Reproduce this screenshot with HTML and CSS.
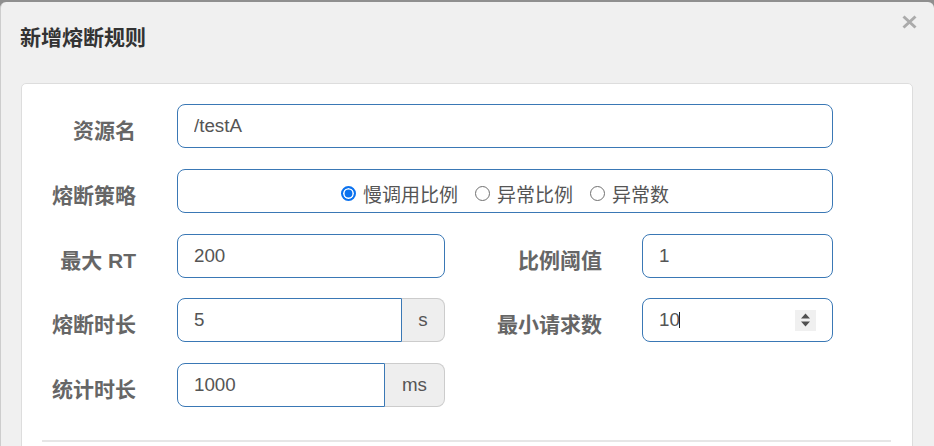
FILE: index.html
```html
<!DOCTYPE html>
<html lang="zh-CN">
<head>
<meta charset="utf-8">
<title>新增熔断规则</title>
<link rel="stylesheet" href="styles.css">
</head>
<body>
<div class="modal">
  <div class="modal-header">
    <h4 class="modal-title">新增熔断规则</h4>
    <button class="close" type="button" aria-label="关闭">
      <svg width="15" height="14" viewBox="0 0 15 14"><path d="M1.5 1.5 L13.5 12.5 M13.5 1.5 L1.5 12.5" stroke="#ababab" stroke-width="3" fill="none"/></svg>
    </button>
  </div>
  <div class="modal-body">
    <div class="panel">
      <form class="form">
        <div class="row">
          <label class="label">资源名</label>
          <div class="field field-wide"><input class="input" type="text" value="/testA"></div>
        </div>
        <div class="row">
          <label class="label">熔断策略</label>
          <div class="field field-wide">
            <div class="input radios">
              <label class="radio"><input type="radio" name="grade" checked><span>慢调用比例</span></label>
              <label class="radio"><input type="radio" name="grade"><span>异常比例</span></label>
              <label class="radio"><input type="radio" name="grade"><span>异常数</span></label>
            </div>
          </div>
        </div>
        <div class="row">
          <label class="label">最大 RT</label>
          <div class="field field-left"><input class="input" type="text" value="200"></div>
          <label class="label label-right">比例阈值</label>
          <div class="field field-right"><input class="input" type="text" value="1"></div>
        </div>
        <div class="row">
          <label class="label">熔断时长</label>
          <div class="field field-left input-group">
            <input class="input input-join" type="text" value="5">
            <span class="addon addon-s">s</span>
          </div>
          <label class="label label-right">最小请求数</label>
          <div class="field field-right">
            <div class="input input-number">
              <span class="value">10</span><span class="caret"></span>
              <span class="spinner">
                <svg width="21" height="21" viewBox="0 0 21 21"><path d="M6 8.5 L10.5 3.5 L15 8.5 Z M6 11.5 L15 11.5 L10.5 16.5 Z" fill="#505050"/></svg>
              </span>
            </div>
          </div>
        </div>
        <div class="row row-last">
          <label class="label">统计时长</label>
          <div class="field field-left input-group">
            <input class="input input-join" type="text" value="1000">
            <span class="addon addon-ms">ms</span>
          </div>
        </div>
      </form>
      <hr class="sep">
    </div>
  </div>
</div>
</body>
</html>
```
FILE: styles.css
```css
* { box-sizing: border-box; }
html, body { margin: 0; padding: 0; }
body {
  background: #8f8f8f;
  font-family: "Liberation Sans", "Noto Sans CJK SC", sans-serif;
  height: 446px;
  overflow: hidden;
}
.modal {
  margin-top: 2px;
  height: 444px;
  background: #f0f0f0;
  border-left: 1px solid #cdcdcd;
  border-radius: 6px 6px 0 0;
  overflow: hidden;
}
.modal-header {
  display: flex;
  justify-content: space-between;
  align-items: flex-start;
  padding: 0 17px 0 19px;
}
.modal-title {
  margin: 25px 0 0;
  font-size: 21px;
  line-height: 21px;
  font-weight: bold;
  color: #333;
}
.close {
  display: block;
  margin-top: 13px;
  padding: 0;
  width: 15px;
  height: 14px;
  border: 0;
  background: none;
}
.close svg { display: block; }
.modal-body {
  padding: 35px 21px 0 20px;
}
.panel {
  background: #fff;
  border: 1px solid #dddddd;
  border-radius: 5px;
  padding: 20px 21px 0 20px;
  height: 400px;
}
.form { margin: 0; }
.row {
  display: flex;
  align-items: center;
  height: 44px;
  margin-bottom: 20.75px;
}
.row-last { margin-bottom: 0; }
.label {
  flex: none;
  width: 94px;
  margin-right: 41px;
  padding-top: 6px;
  text-align: right;
  white-space: nowrap;
  font-size: 21px;
  font-weight: bold;
  color: #666;
}
.label-right {
  width: 157px;
  margin-right: 40px;
}
.field { flex: none; height: 44px; }
.field-wide { width: 656px; }
.field-left { width: 268px; }
.field-right { width: 191px; }
.input {
  display: block;
  width: 100%;
  height: 44px;
  margin: 0;
  padding: 0 16px;
  border: 1px solid #3a78b5;
  border-radius: 8px;
  background: #fff;
  font-family: "Liberation Sans", "Noto Sans CJK SC", sans-serif;
  font-size: 18.75px;
  color: #555;
  outline: none;
}
.input-group { display: flex; }
.input-join {
  flex: 1;
  width: auto;
  min-width: 0;
  border-radius: 8px 0 0 8px;
}
.addon {
  flex: none;
  height: 44px;
  display: flex;
  align-items: center;
  justify-content: center;
  background: #eeeeee;
  border: 1px solid #cccccc;
  border-left: 0;
  border-radius: 0 8px 8px 0;
  font-size: 18.75px;
  color: #555;
}
.addon-s { width: 43px; }
.addon-ms { width: 60px; }
.radios {
  display: flex;
  align-items: center;
  justify-content: center;
  padding-top: 6px;
  font-size: 19px;
}
.radio {
  display: flex;
  align-items: center;
  margin-left: 17px;
  color: #555;
}
.radio:first-child { margin-left: 0; }
.radio input {
  appearance: none;
  -webkit-appearance: none;
  flex: none;
  width: 15px;
  height: 15px;
  margin: 0 7px 0 0;
  border: 1.4px solid #707070;
  border-radius: 50%;
  background: #fff;
}
.radio input:checked {
  border: 2px solid #0b72ef;
  background: #0b72ef;
  box-shadow: inset 0 0 0 1.6px #fff;
}
.input-number {
  display: flex;
  align-items: center;
}
.value { line-height: 1; }
.caret {
  display: block;
  width: 1px;
  height: 16px;
  margin-left: -1px;
  background: #222;
}
.spinner {
  display: block;
  margin-left: auto;
  width: 21px;
  height: 21px;
  background: #f0f0f0;
}
.spinner svg { display: block; }
.sep {
  margin: 33px 0 0;
  height: 2px;
  border: 0;
  background: #e6e6e6;
}
```
